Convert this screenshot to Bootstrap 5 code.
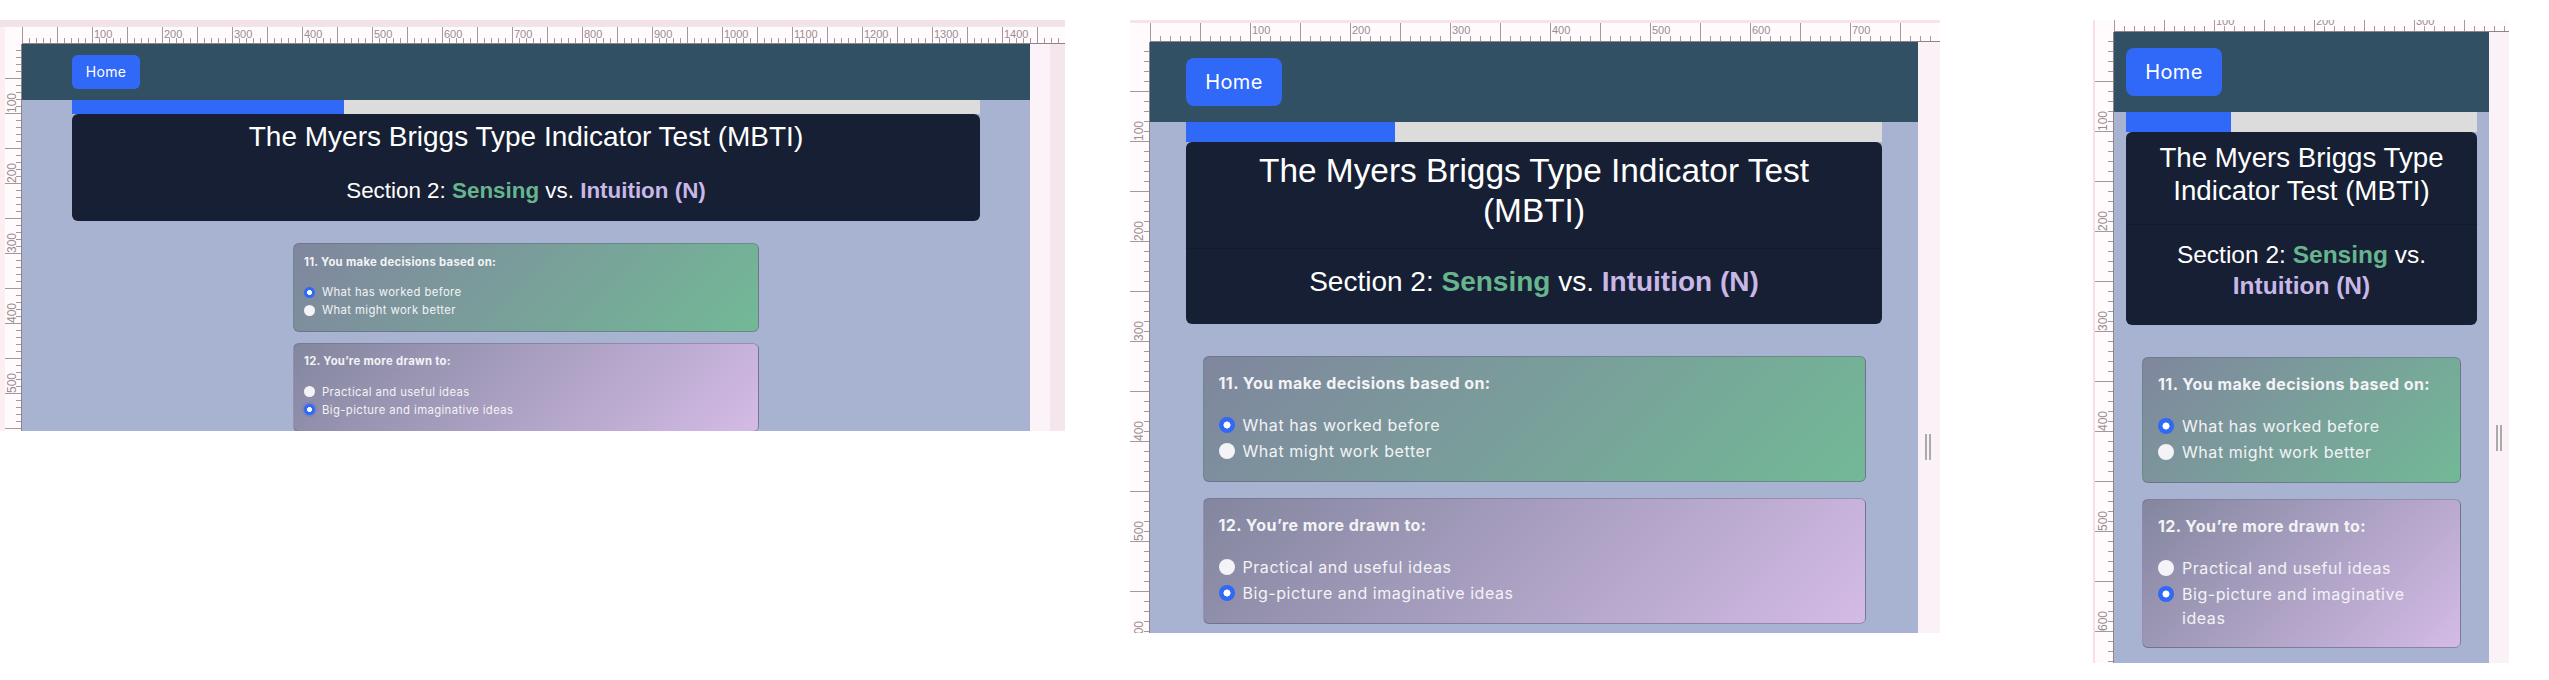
<!DOCTYPE html>
<html lang="en">
  <head>
    <meta charset="UTF-8" />
    <meta name="viewport" content="width=device-width, initial-scale=1.0" />
    <title>MBTI Test - responsive views</title>
    <link href="https://cdn.jsdelivr.net/npm/bootstrap@5.3.0/dist/css/bootstrap.min.css" rel="stylesheet" />
    <style>
      body { background: #fff; width: 2549px; height: 680px; overflow: hidden; position: relative; }

      /* each preview window sits on a free canvas */
      .view { position: absolute; top: 20px; overflow: hidden; background: #fcf3f8; }
      .view-a { left: 0; width: 1065px; height: 411px; --tick: 7px; --major: 35px; --cell: 70px;
        --rule: 17px; --band: 7px; --ruler-h: 17px; --gut-l: 5px; --side: 35px; --pad: 50px;
        --nav: 56px; --bar: 14px; --title: 28px; --title-lh: 36px; --sec: 22.4px; --sec-lh: 30px; --head-px: 8px;
        --head-pt: 5px; --head-pb: 5px; --sec-pt: 15px; --sec-pb: 15px; --qs-gap: 10.5px; --qs-top: 22px; --btn-w: 68px; --btn-h: 34px; --btn-fs: 14px;
        --q-w: 466px; --q-h: 88px; --q-pad: 10px; --q-fs: 11.3px; --dot: 11px; --dot-gap: 7px; --opt: 18px; --q-head: 29px; }
      .view-b { left: 1130px; width: 810px; height: 613px; --tick: 10px; --major: 50px; --cell: 100px;
        --band: 3px; --ruler-h: 19px; --gut-l: 0px; --rule: 20px; --side: 22px; --pad: 36px;
        --nav: 80px; --bar: 20px; --title: 33.4px; --title-lh: 40px; --sec: 28px; --sec-lh: 34px; --head-px: 44px;
        --head-pt: 9px; --head-pb: 17px; --sec-pt: 16px; --sec-pb: 25px; --qs-gap: 16px; --qs-top: 32px; --btn-w: 96px; --btn-h: 48px; --btn-fs: 20px;
        --q-w: 663px; --q-h: 126px; --q-pad: 15px; --q-fs: 16px; --dot: 16px; --dot-gap: 8px; --opt: 26px; --q-head: 40px; }
      .view-c { left: 2093px; width: 416px; height: 643px; --tick: 10px; --major: 50px; --cell: 100px;
        --band: 0px; --ruler-h: 12px; --gut-l: 2px; --rule: 19px; --side: 20px; --pad: 12px;
        --nav: 80px; --bar: 20px; --title: 27.7px; --title-lh: 33px; --sec: 24.5px; --sec-lh: 31px; --head-px: 8px;
        --head-pt: 9px; --head-pb: 17px; --sec-pt: 14px; --sec-pb: 24px; --qs-gap: 16px; --qs-top: 32px; --btn-w: 96px; --btn-h: 48px; --btn-fs: 20px;
        --q-w: 319px; --q-h: 126px; --q-pad: 15px; --q-fs: 16px; --dot: 16px; --dot-gap: 8px; --opt: 26px; --q-head: 40px; }

      .view-band { height: var(--band); background: #f8e3e8; }
      .view-a .view-band { background: #f0e3ea; border-top: 1px solid #fbdde2; }
      .view-row { height: calc(100% - var(--band) - var(--ruler-h)); }

      .ruler-top { height: var(--ruler-h); margin-left: var(--gut-l); padding-left: var(--rule); background: #fffbfd; overflow: hidden; }
      .ticks-x { height: 100%; border-bottom: 1px solid #8f8488;
        background-image: linear-gradient(90deg, #a5979b 1px, transparent 1px), linear-gradient(90deg, #a5979b 1px, transparent 1px);
        background-size: var(--major) 100%, var(--tick) 5px; background-repeat: repeat-x; background-position: left bottom; }
      .ruler-cell { flex: 0 0 var(--cell); font: 11px/1 "Liberation Sans", sans-serif; color: #9b8c90; padding-left: 2px; padding-top: 2px; white-space: nowrap; }
      .view-c .ruler-cell { margin-top: -6px; }

      .ruler-left { flex: 0 0 var(--rule); margin-left: var(--gut-l); background: #fffbfd; overflow: hidden; border-right: 1px solid #8f8488;
        background-image: linear-gradient(0deg, #a5979b 1px, transparent 1px), linear-gradient(0deg, #a5979b 1px, transparent 1px);
        background-size: 100% var(--major), 5px var(--tick); background-repeat: repeat-y; background-position: right top; }
      .ruler-row { flex: 0 0 var(--cell); font: 12px/1 "Liberation Sans", sans-serif; color: #9b8c90; }
      .ruler-row span { writing-mode: vertical-rl; transform: rotate(180deg); padding-top: 1px; padding-left: 2px; }

      .view-a { box-shadow: inset 5px 0 0 #fdeef2; }
      .view-b { box-shadow: inset 3px 0 0 #f8e3e8, inset -3px 0 0 #f8e3e8; }
      .view-c { box-shadow: inset 2px 0 0 #fbdde2; }

      .site { flex: 0 0 auto; width: calc(100% - var(--gut-l) - var(--rule) - var(--side)); background: #a8b3d1; overflow: hidden; }
      .right-strip { flex: 1 1 0; background: #fbf2f7; position: relative; }
      .view-a .right-strip { background: linear-gradient(90deg, #fbf3f8 20px, #f4e6ec 20px); }
      .grip { position: absolute; width: 6px; height: 26px; border-left: 2px solid #aaa; border-right: 2px solid #aaa; }
      .view-b .grip { left: 7px; top: 392px; }
      .view-c .grip { left: 7px; top: 393px; }

      .site-nav { height: var(--nav); background: #325064; padding: 0 var(--pad); }
      .home-btn { width: var(--btn-w); height: var(--btn-h); padding: 0; border: 0; border-radius: calc(var(--btn-h) / 6);
        background: #3068f8; color: #fff; font: 400 var(--btn-fs)/1 "Inter", sans-serif; letter-spacing: .02em; }

      .site-main { padding: 0 var(--pad); }
      .test-bar { height: var(--bar); border-radius: 0; background: #dcdcdc; }
      .test-bar .progress-bar { background: #3068f8; }

      .test-head { background: #161f33; color: #fff; border: 0; border-radius: 6px; font-family: "Liberation Sans", Arial, sans-serif; }
      .test-head .card-header { background: transparent; border-bottom: 1px solid #121a2b; padding: var(--head-pt) var(--head-px) var(--head-pb); }
      .view-a .test-head .card-header { border-bottom-color: transparent; }
      .test-title { font-size: var(--title); line-height: var(--title-lh); margin: 0; font-weight: 400; }
      .test-sec { font-size: var(--sec); line-height: var(--sec-lh); padding: var(--sec-pt) 8px var(--sec-pb); margin: 0; font-weight: 400; }
      .txt-s { color: #67b58e; font-weight: 700; }
      .txt-n { color: #c9b7e8; font-weight: 700; }

      .q-list { width: var(--q-w); margin-top: var(--qs-top); gap: var(--qs-gap); }
      .q-box { min-height: var(--q-h); padding: var(--q-pad) var(--q-pad) calc(var(--q-pad) + 2px); border-radius: 6px; border: 1px solid rgba(90, 90, 120, .45);
        color: #f3f3f6; font-family: "Inter", sans-serif; font-size: var(--q-fs); letter-spacing: .035em; }
      .q-green { background: linear-gradient(135deg, #80869e 0%, #72b996 100%); }
      .q-purple { background: linear-gradient(135deg, #83869f 0%, #d4bbe6 100%); }
      .q-title { height: var(--q-head); padding-top: calc(var(--q-pad) * .15); font-weight: 700; line-height: 1.2; letter-spacing: .027em; }
      .q-opt { min-height: var(--opt); margin: 0; padding: 0; gap: var(--dot-gap); line-height: 1.5; }
      .q-opt .form-check-input { float: none; flex: 0 0 var(--dot); width: var(--dot); height: var(--dot); margin: calc((var(--opt) - var(--dot)) / 2) 0 0; border: 0; background-color: #f3f3f8; }
      .q-opt .form-check-input:checked { background-color: #3068f8; background-image: radial-gradient(circle closest-side, #fff 0 40%, transparent 48%); }
      .q-opt .form-check-label { padding-top: 1px; }
      .view-a .q-purple .form-check-input:checked { box-shadow: 0 0 0 2px rgba(48, 104, 248, .25); }
    </style>
  </head>
  <body>
    <div class="view view-a" data-top="14" data-left="5">
      <div class="view-band"></div>
      <div class="ruler-top"><div class="ticks-x d-flex"></div></div>
      <div class="view-row d-flex">
        <div class="ruler-left d-flex flex-column"></div>
        <div class="site">
          <nav class="site-nav d-flex align-items-center">
            <button class="btn home-btn" type="button">Home</button>
          </nav>
          <main class="site-main">
            <div class="progress test-bar"><div class="progress-bar" style="width: 30%"></div></div>
            <div class="card test-head text-center">
              <div class="card-header"><h1 class="test-title">The Myers Briggs Type Indicator Test (MBTI)</h1></div>
              <p class="test-sec">Section 2: <span class="txt-s">Sensing</span> vs. <span class="txt-n">Intuition (N)</span></p>
            </div>
            <div class="q-list d-flex flex-column mx-auto">
              <div class="q-box q-green">
                <div class="q-title">11. You make decisions based on:</div>
                <div class="form-check d-flex q-opt"><input class="form-check-input" type="radio" name="a11" id="a11a" checked /><label class="form-check-label" for="a11a">What has worked before</label></div>
                <div class="form-check d-flex q-opt"><input class="form-check-input" type="radio" name="a11" id="a11b" /><label class="form-check-label" for="a11b">What might work better</label></div>
              </div>
              <div class="q-box q-purple">
                <div class="q-title">12. You’re more drawn to:</div>
                <div class="form-check d-flex q-opt"><input class="form-check-input" type="radio" name="a12" id="a12a" /><label class="form-check-label" for="a12a">Practical and useful ideas</label></div>
                <div class="form-check d-flex q-opt"><input class="form-check-input" type="radio" name="a12" id="a12b" checked /><label class="form-check-label" for="a12b">Big-picture and imaginative ideas</label></div>
              </div>
            </div>
          </main>
        </div>
        <div class="right-strip"></div>
      </div>
    </div>

    <div class="view view-b" data-top="7" data-left="6">
      <div class="view-band"></div>
      <div class="ruler-top"><div class="ticks-x d-flex"></div></div>
      <div class="view-row d-flex">
        <div class="ruler-left d-flex flex-column"></div>
        <div class="site">
          <nav class="site-nav d-flex align-items-center">
            <button class="btn home-btn" type="button">Home</button>
          </nav>
          <main class="site-main">
            <div class="progress test-bar"><div class="progress-bar" style="width: 30%"></div></div>
            <div class="card test-head text-center">
              <div class="card-header"><h1 class="test-title">The Myers Briggs Type Indicator Test (MBTI)</h1></div>
              <p class="test-sec">Section 2: <span class="txt-s">Sensing</span> vs. <span class="txt-n">Intuition (N)</span></p>
            </div>
            <div class="q-list d-flex flex-column mx-auto">
              <div class="q-box q-green">
                <div class="q-title">11. You make decisions based on:</div>
                <div class="form-check d-flex q-opt"><input class="form-check-input" type="radio" name="b11" id="b11a" checked /><label class="form-check-label" for="b11a">What has worked before</label></div>
                <div class="form-check d-flex q-opt"><input class="form-check-input" type="radio" name="b11" id="b11b" /><label class="form-check-label" for="b11b">What might work better</label></div>
              </div>
              <div class="q-box q-purple">
                <div class="q-title">12. You’re more drawn to:</div>
                <div class="form-check d-flex q-opt"><input class="form-check-input" type="radio" name="b12" id="b12a" /><label class="form-check-label" for="b12a">Practical and useful ideas</label></div>
                <div class="form-check d-flex q-opt"><input class="form-check-input" type="radio" name="b12" id="b12b" checked /><label class="form-check-label" for="b12b">Big-picture and imaginative ideas</label></div>
              </div>
            </div>
          </main>
        </div>
        <div class="right-strip"><div class="grip"></div></div>
      </div>
    </div>

    <div class="view view-c" data-top="3" data-left="6">
      <div class="view-band"></div>
      <div class="ruler-top"><div class="ticks-x d-flex"></div></div>
      <div class="view-row d-flex">
        <div class="ruler-left d-flex flex-column"></div>
        <div class="site">
          <nav class="site-nav d-flex align-items-center">
            <button class="btn home-btn" type="button">Home</button>
          </nav>
          <main class="site-main">
            <div class="progress test-bar"><div class="progress-bar" style="width: 30%"></div></div>
            <div class="card test-head text-center">
              <div class="card-header"><h1 class="test-title">The Myers Briggs Type Indicator Test (MBTI)</h1></div>
              <p class="test-sec">Section 2: <span class="txt-s">Sensing</span> vs. <span class="txt-n">Intuition (N)</span></p>
            </div>
            <div class="q-list d-flex flex-column mx-auto">
              <div class="q-box q-green">
                <div class="q-title">11. You make decisions based on:</div>
                <div class="form-check d-flex q-opt"><input class="form-check-input" type="radio" name="c11" id="c11a" checked /><label class="form-check-label" for="c11a">What has worked before</label></div>
                <div class="form-check d-flex q-opt"><input class="form-check-input" type="radio" name="c11" id="c11b" /><label class="form-check-label" for="c11b">What might work better</label></div>
              </div>
              <div class="q-box q-purple">
                <div class="q-title">12. You’re more drawn to:</div>
                <div class="form-check d-flex q-opt"><input class="form-check-input" type="radio" name="c12" id="c12a" /><label class="form-check-label" for="c12a">Practical and useful ideas</label></div>
                <div class="form-check d-flex q-opt"><input class="form-check-input" type="radio" name="c12" id="c12b" checked /><label class="form-check-label" for="c12b">Big-picture and imaginative ideas</label></div>
              </div>
            </div>
          </main>
        </div>
        <div class="right-strip"><div class="grip"></div></div>
      </div>
    </div>

    <script src="https://cdn.jsdelivr.net/npm/bootstrap@5.3.0/dist/js/bootstrap.bundle.min.js"></script>
    <script>
      // ruler numbers, 100 units apart
      document.querySelectorAll(".view").forEach((view) => {
        const top = view.querySelector(".ticks-x");
        const left = view.querySelector(".ruler-left");
        for (let i = 0; i <= Number(view.dataset.top); i++) {
          const cell = document.createElement("div");
          cell.className = "ruler-cell";
          cell.textContent = i ? i * 100 : "";
          top.appendChild(cell);
        }
        for (let i = 1; i <= Number(view.dataset.left); i++) {
          const row = document.createElement("div");
          row.className = "ruler-row d-flex align-items-end justify-content-center";
          const num = document.createElement("span");
          num.textContent = i * 100;
          row.appendChild(num);
          left.appendChild(row);
        }
      });
    </script>
  </body>
</html>
